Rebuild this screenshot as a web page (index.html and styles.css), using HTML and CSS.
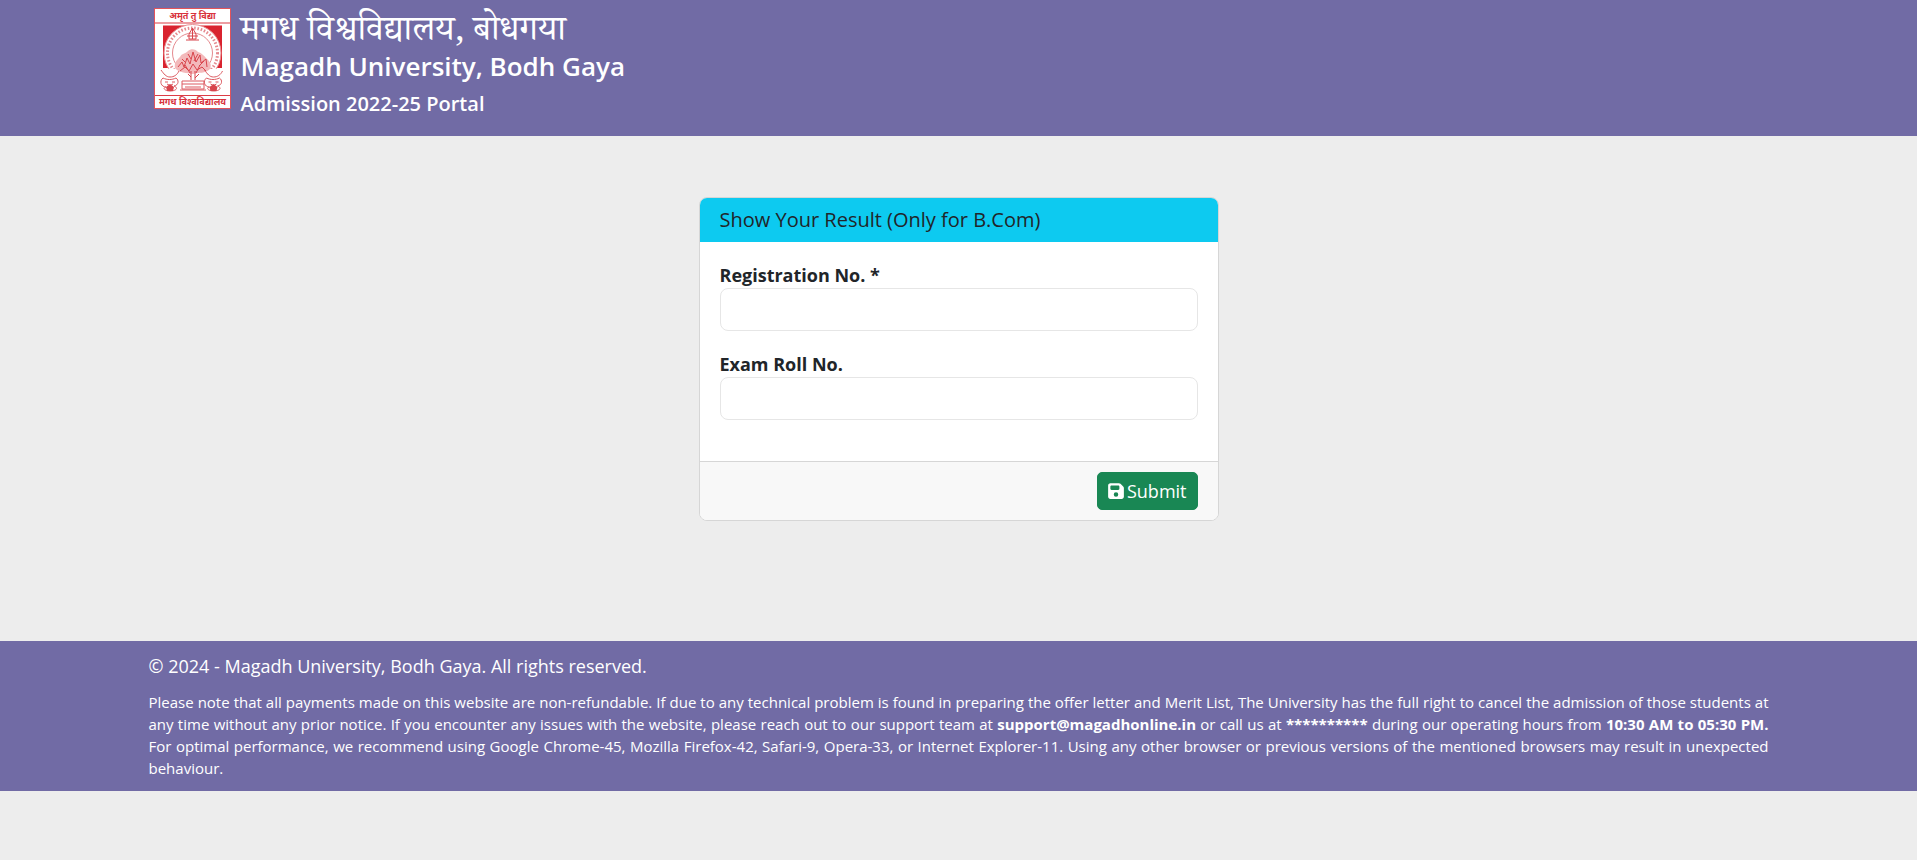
FILE: index.html
```html
<!DOCTYPE html>
<html lang="en">
<head>
  <meta charset="UTF-8">
  <meta name="viewport" content="width=device-width, initial-scale=1.0">
  <title>Magadh University, Bodh Gaya</title>
  <link rel="stylesheet" href="styles.css">
</head>
<body>
  <!-- Header -->
  <header class="site-header">
    <div class="container brand">
      <svg class="logo" viewBox="0 0 77 101" role="img" aria-label="Magadh University">
        <rect x="0.5" y="0.5" width="76" height="100" fill="#fff" stroke="#e2535b"/>
        <text class="logo-text" x="38.5" y="11">अमृतं तु विद्या</text>
        <path d="M1 15H76M1 87.500H76" stroke="#dc3d46" stroke-width="1.200"/>
        <path d="M9 17.500H68V60H9z" fill="#d9232f"/>
        <circle cx="38.500" cy="45" r="28.500" fill="#fff" stroke="#e98f93"/>
        <circle cx="38.500" cy="45" r="25" fill="none" stroke="#e58a8f" stroke-width="3" stroke-dasharray="1.500 1.800"/>
        <circle cx="38.500" cy="45" r="20" fill="#fff" stroke="#e58a8f"/>
        <path d="M8 61H69V86H8z" fill="#fff"/>
        <!-- top ornament -->
        <path d="M35 31V26L38.500 20L42 26V31zM32 32H45M33 28H44M38.500 20V31" fill="none" stroke="#d8444c"/>
        <!-- tree -->
        <path d="M21 60C20 54 23 52 26 49C28 45 31 46 34 43C37 40 42 41 44 44C48 45 50 48 52 50C56 53 58 57 56 61C51 66 45 64 39 66C33 65 25 65 21 60z" fill="#f3b9bb"/>
        <path d="M24 59l4-5 2 5 3-9 3 6 3-12 3 10 4-7 1 8 5-4 1 8M26 63l5-4 4 4 4-7 4 6 5-3 4 4M28 51l4 4M34 46l3 5M44 46l-4 7M50 53l-5 5M31 57l5 8M46 57l-4 8M37 63V72M41 63V72M34 66l3 3M45 66l-4 4" fill="none" stroke="#d8444c" stroke-width="1"/>
        <!-- pedestal -->
        <path d="M28 73H50V81H28zM28 76H50M31 79H47M26 82H52" fill="none" stroke="#dc5960"/>
        <!-- lions -->
        <path id="lion" d="M7 62C10 66 12 69 16 69C20 69 23 67 25 63M9 70C5 73 7 79 12 79C8 80 11 83 16 83C22 83 25 80 20 78C25 77 25 72 22 70C18 72 13 72 9 70zM11 74H14M18 74H21M13 76Q16 79 19 76" fill="none" stroke="#dc5960"/>
        <path d="M16 76l4 3-1 4h-6l-1-4z" fill="#d8444c"/>
        <use href="#lion" x="43.500"/>
        <path d="M59.500 76l4 3-1 4h-6l-1-4z" fill="#d8444c"/>
        <text class="logo-text" x="38.500" y="96.500">मगध विश्वविद्यालय</text>
      </svg>
      <div class="brand-text">
        <p class="brand-hindi" lang="hi">मगध विश्वविद्यालय, बोधगया</p>
        <h1>Magadh University, Bodh Gaya</h1>
        <p class="brand-portal">Admission 2022-25 Portal</p>
      </div>
    </div>
  </header>

  <!-- Result form -->
  <main>
    <form class="card">
      <h2 class="card-header">Show Your Result (Only for B.Com)</h2>
      <div class="card-body">
        <div class="field">
          <label for="regNo">Registration No. *</label>
          <input type="text" id="regNo" name="regNo" required>
        </div>
        <div class="field">
          <label for="rollNo">Exam Roll No.</label>
          <input type="text" id="rollNo" name="rollNo">
        </div>
      </div>
      <div class="card-footer">
        <button type="submit" class="btn-submit">
          <svg class="icon" viewBox="0 0 448 512" aria-hidden="true"><path fill="currentColor" fill-rule="evenodd" d="M64 32C28.700 32 0 60.700 0 96V416c0 35.300 28.700 64 64 64H384c35.300 0 64-28.700 64-64V173.300c0-17-6.700-33.300-18.700-45.300L352 50.700C340 38.700 323.700 32 306.700 32H64zm0 96c0-17.700 14.300-32 32-32H288c17.700 0 32 14.300 32 32v64c0 17.700-14.300 32-32 32H96c-17.700 0-32-14.300-32-32V128zM224 288a64 64 0 1 1 0 128 64 64 0 1 1 0-128z"/></svg>
          Submit
        </button>
      </div>
    </form>
  </main>

  <!-- Footer -->
  <footer class="site-footer">
    <div class="container">
      <p class="copyright">© 2024 - Magadh University, Bodh Gaya. All rights reserved.</p>
      <p class="note">
        Please note that all payments made on this website are non-refundable. If due to any technical problem is found in preparing the offer letter and Merit List, The University has the full right to cancel the admission of those students at any time without any prior notice. If you encounter any issues with the website, please reach out to our support team at <b>support@magadhonline.in</b> or call us at <b>**********</b> during our operating hours from <b>10:30 AM to 05:30 PM.</b> For optimal performance, we recommend using Google Chrome-45, Mozilla Firefox-42, Safari-9, Opera-33, or Internet Explorer-11. Using any other browser or previous versions of the mentioned browsers may result in unexpected behaviour.
      </p>
    </div>
  </footer>
</body>
</html>
```
FILE: styles.css
```css
* {
  box-sizing: border-box;
}

body {
  margin: 0;
  font-family: "Open Sans", "Noto Sans", sans-serif;
  font-size: 18px;
  color: #212529;
  background-color: #ededed;
}

h1, h2, p {
  margin: 0;
}

.container {
  max-width: 1620px;
  margin: 0 auto;
}

/* Header */
.site-header {
  background-color: #716ba5;
  color: #fff;
  padding: 8px 0 16px;
}

.brand {
  display: flex;
  gap: 10px;
  padding-left: 5px;
}

.logo {
  width: 77px;
  height: 101px;
}

.logo-text {
  font-size: 9px;
  font-weight: 700;
  fill: #d8323c;
  text-anchor: middle;
}

.brand-text {
  padding-top: 10px;
}

.brand-hindi {
  font-family: "Noto Serif Devanagari", "Noto Sans Devanagari", "Noto Sans", serif;
  font-size: 35px;
  line-height: 34px;
}

.brand-text h1 {
  margin-bottom: 8px;
  font-size: 26px;
  font-weight: 600;
  line-height: 28px;
}

.brand-portal {
  font-size: 20px;
  font-weight: 600;
  line-height: 32px;
}

/* Result form */
main {
  padding: 61px 16px 120px;
}

.card {
  max-width: 520px;
  margin: 0 auto;
  background-color: #fff;
  border: 1px solid #d6d6d6;
  border-radius: 8px;
  overflow: hidden;
}

.card-header {
  padding: 8px 20px;
  background-color: #0dcaf0;
  font-size: 20px;
  font-weight: 500;
  line-height: 28px;
}

.card-body {
  padding: 20px 20px 21px;
}

.field {
  margin-bottom: 20px;
}

.field label {
  display: block;
  font-weight: 700;
  line-height: 26px;
}

.field input {
  display: block;
  width: 100%;
  height: 43px;
  padding: 8px 12px;
  border: 1px solid #e6e6e6;
  border-radius: 8px;
  font: inherit;
}

.card-footer {
  display: flex;
  justify-content: flex-end;
  padding: 10px 20px;
  background-color: #f8f8f8;
  border-top: 1px solid #d6d6d6;
}

.btn-submit {
  display: flex;
  align-items: center;
  gap: 3px;
  height: 38px;
  padding: 0 10px;
  border: 1px solid #198754;
  border-radius: 5px;
  background-color: #198754;
  color: #fff;
  font: inherit;
  cursor: pointer;
}

.icon {
  width: 16px;
  height: 18px;
}

/* Footer */
.site-footer {
  background-color: #716ba5;
  color: #fff;
  padding: 12px 0;
}

.copyright {
  line-height: 26px;
  margin-bottom: 12px;
}

.note {
  font-size: 15px;
  line-height: 22px;
  text-align: justify;
}
```
